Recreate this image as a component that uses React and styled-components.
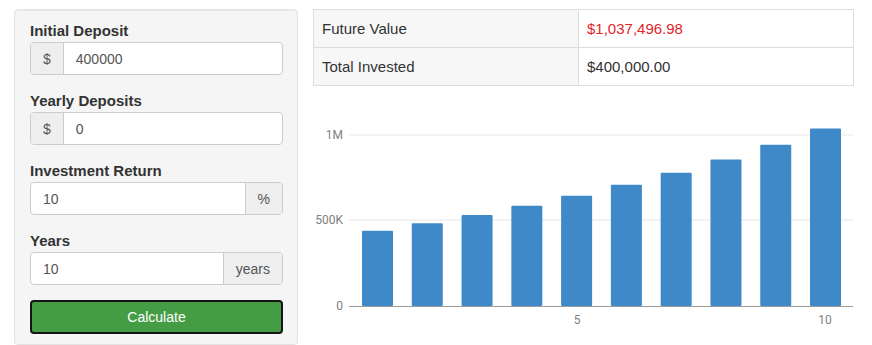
import React from 'react';
import styled, { createGlobalStyle } from 'styled-components';

const GlobalStyle = createGlobalStyle`
  body {
    margin: 0;
    background: #fff;
    font-family: "Liberation Sans", Arial, sans-serif;
    color: #333;
  }
`;

const Page = styled.div`
  display: flex;
  align-items: flex-start;
  gap: 15px;
  padding: 9px 0 0 14px;
`;

const Well = styled.div`
  box-sizing: border-box;
  width: 284px;
  height: 336px;
  padding: 10px 14px 10px 15px;
  background: #f5f5f5;
  border: 1px solid #e3e3e3;
  border-radius: 4px;
  box-shadow: inset 0 1px 1px rgba(0, 0, 0, 0.05);
`;

const FormGroup = styled.div`
  margin-bottom: 15px;
`;

const Label = styled.label`
  display: block;
  font-size: 15px;
  font-weight: bold;
  line-height: 21px;
  margin-bottom: 1px;
  color: #333;
`;

const InputGroup = styled.div`
  display: flex;
  height: 33px;
  box-sizing: border-box;
  border: 1px solid #ccc;
  border-radius: 4px;
  overflow: hidden;
  background: #fff;
`;

const Addon = styled.span`
  display: flex;
  align-items: center;
  justify-content: center;
  padding: 0 12px;
  background: #eee;
  color: #555;
  font-size: 14px;
  ${p => (p.$side === 'left' ? 'border-right: 1px solid #ccc;' : 'border-left: 1px solid #ccc;')}
`;

const Field = styled.input`
  flex: 1;
  min-width: 0;
  border: 0;
  outline: none;
  padding: 0 12px;
  font-family: inherit;
  font-size: 14px;
  color: #555;
  background: transparent;
`;

const CalcButton = styled.button`
  display: block;
  width: 100%;
  height: 34px;
  background: #449d44;
  border: 2px solid #151515;
  border-radius: 4px;
  color: #fff;
  font-family: inherit;
  font-size: 14px;
  cursor: pointer;
`;

const Results = styled.div`
  width: 541px;
`;

const Table = styled.table`
  width: 100%;
  border-collapse: collapse;
  margin-bottom: 10px;
  font-size: 15px;
`;

const Cell = styled.td`
  border: 1px solid #ddd;
  padding: 8px;
  line-height: 21px;
  background: ${p => (p.$head ? '#f7f7f7' : '#fff')};
  color: ${p => (p.$highlight ? '#e3262a' : '#333')};
  width: ${p => (p.$head ? '248px' : 'auto')};
`;

const ChartSvg = styled.svg`
  display: block;
  font-family: Roboto, "Liberation Sans", sans-serif;
`;

const fields = [
  { label: 'Initial Deposit', value: '400000', addon: '$', side: 'left' },
  { label: 'Yearly Deposits', value: '0', addon: '$', side: 'left' },
  { label: 'Investment Return', value: '10', addon: '%', side: 'right' },
  { label: 'Years', value: '10', addon: 'years', side: 'right' },
];

const values = Array.from({ length: 10 }, (_, i) => 400000 * Math.pow(1.1, i + 1));

const Chart = () => {
  const zeroY = 210;
  const scale = 171 / 1000000;
  return (
    <ChartSvg width="541" height="240">
      <line x1="36" x2="540" y1="39" y2="39" stroke="#e6e6e6" />
      <line x1="36" x2="540" y1="124" y2="124" stroke="#e6e6e6" />
      {values.map((v, i) => {
        const h = v * scale;
        const cx = 64.5 + i * 49.78;
        return (
          <rect key={i} x={cx - 15.5} y={zeroY - h} width="31" height={h} rx="1" fill="#3f89c9" />
        );
      })}
      <line x1="36" x2="540" y1={zeroY + 0.5} y2={zeroY + 0.5} stroke="#9a9a9a" />
      <g fill="#808080" fontSize="12" textAnchor="end">
        <text x="30" y="43">1M</text>
        <text x="30" y="128">500K</text>
        <text x="30" y="214">0</text>
      </g>
      <g fill="#808080" fontSize="12" textAnchor="middle">
        <text x="264" y="228">5</text>
        <text x="512" y="228">10</text>
      </g>
    </ChartSvg>
  );
};

export default function App() {
  return (
    <>
      <GlobalStyle />
      <Page>
        <Well>
          {fields.map(f => (
            <FormGroup key={f.label}>
              <Label>{f.label}</Label>
              <InputGroup>
                {f.side === 'left' && <Addon $side="left">{f.addon}</Addon>}
                <Field defaultValue={f.value} />
                {f.side === 'right' && <Addon $side="right">{f.addon}</Addon>}
              </InputGroup>
            </FormGroup>
          ))}
          <CalcButton type="button">Calculate</CalcButton>
        </Well>
        <Results>
          <Table>
            <tbody>
              <tr>
                <Cell $head>Future Value</Cell>
                <Cell $highlight>$1,037,496.98</Cell>
              </tr>
              <tr>
                <Cell $head>Total Invested</Cell>
                <Cell>$400,000.00</Cell>
              </tr>
            </tbody>
          </Table>
          <Chart />
        </Results>
      </Page>
    </>
  );
}
